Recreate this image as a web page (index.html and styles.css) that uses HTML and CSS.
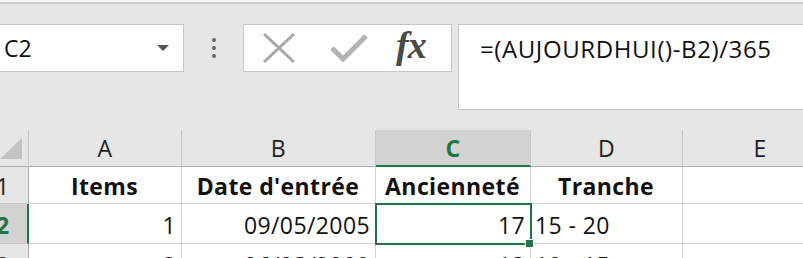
FILE: index.html
```html
<!DOCTYPE html>
<html lang="fr">
<head>
    <meta charset="UTF-8">
    <title>Classeur - Ancienneté</title>
    <link rel="stylesheet" href="styles.css">
</head>
<body>

    <div class="top-strip"></div>

    <!-- barre de formule -->
    <div class="formula-bar">
        <div class="name-box">
            <span>C2</span>
            <span class="arrow"></span>
        </div>
        <div class="grip">
            <span></span><span></span><span></span>
        </div>
        <div class="buttons">
            <svg class="icon-x" width="34" height="30" viewBox="0 0 34 30">
                <path d="M2 1 L32 29 M32 1 L2 29" stroke="#a9a9a9" stroke-width="3" fill="none"/>
            </svg>
            <svg class="icon-check" width="38" height="30" viewBox="0 0 38 30">
                <path d="M2 15 L13 26 L36 3" stroke="#b3b3b3" stroke-width="5" fill="none"/>
            </svg>
            <span class="fx">fx</span>
        </div>
        <div class="formula">=(AUJOURDHUI()-B2)/365</div>
    </div>

    <!-- feuille -->
    <div class="sheet">
        <div class="corner"><span class="tri"></span></div>
        <div class="col-head">A</div>
        <div class="col-head">B</div>
        <div class="col-head selected">C</div>
        <div class="col-head">D</div>
        <div class="col-head">E</div>

        <div class="row-head">1</div>
        <div class="cell bold center">Items</div>
        <div class="cell bold center">Date d'entrée</div>
        <div class="cell bold center">Ancienneté</div>
        <div class="cell bold center">Tranche</div>
        <div class="cell"></div>

        <div class="row-head selected">2</div>
        <div class="cell right">1</div>
        <div class="cell right">09/05/2005</div>
        <div class="cell right active">17<span class="handle"></span></div>
        <div class="cell">15 - 20</div>
        <div class="cell"></div>

        <div class="row-head">3</div>
        <div class="cell right">2</div>
        <div class="cell right">06/03/2009</div>
        <div class="cell right">13</div>
        <div class="cell">10 - 15</div>
        <div class="cell"></div>
    </div>

</body>
</html>
```

FILE: styles.css
```css
body {
    margin: 0;
    padding: 0;
    width: 803px;
    height: 258px;
    overflow: hidden;
    background-color: #e6e6e6;
    font-family: 'Open Sans', 'Liberation Sans', sans-serif;
    color: #222;
}

.top-strip {
    height: 2px;
    background-color: #f4f4f4;
    border-bottom: 2px solid #cacaca;
}

/* Formula bar */
.formula-bar {
    display: flex;
    align-items: flex-start;
    height: 126px;
    padding-top: 20px;
    box-sizing: border-box;
}

.name-box {
    width: 184px;
    height: 48px;
    box-sizing: border-box;
    background-color: #fff;
    border: 1px solid #c6c6c6;
    border-left: none;
    display: flex;
    align-items: center;
    justify-content: space-between;
    padding: 0 14px 0 4px;
    font-size: 23px;
    color: #111;
}

.name-box .arrow {
    width: 0;
    height: 0;
    border-left: 6px solid transparent;
    border-right: 6px solid transparent;
    border-top: 6px solid #555;
}

.grip {
    width: 59px;
    height: 48px;
    display: flex;
    flex-direction: column;
    align-items: center;
    justify-content: center;
    gap: 4px;
}

.grip span {
    width: 4px;
    height: 4px;
    border-radius: 2px;
    background-color: #666;
}

.buttons {
    width: 209px;
    height: 48px;
    box-sizing: border-box;
    background-color: #fff;
    border: 1px solid #c6c6c6;
    display: flex;
    align-items: center;
    padding-left: 18px;
}

.icon-check {
    margin-left: 34px;
}

.fx {
    margin-left: 28px;
    font-family: 'Liberation Serif', serif;
    font-style: italic;
    font-weight: bold;
    font-size: 38px;
    line-height: 1;
    color: #4a4a4a;
    letter-spacing: -1px;
    margin-top: -6px;
}

.formula {
    margin-left: 6px;
    flex: 1;
    height: 86px;
    box-sizing: border-box;
    background-color: #fff;
    border: 1px solid #c6c6c6;
    border-right: none;
    padding: 7px 0 0 21px;
    font-size: 24px;
    letter-spacing: 0.6px;
    color: #111;
    white-space: nowrap;
}

/* Sheet */
.sheet {
    display: grid;
    grid-template-columns: 29px 153px 194px 155px 152px 155px;
    grid-template-rows: 37px 37px 40px 40px;
    font-size: 23px;
    letter-spacing: 0.4px;
}

.corner {
    border-right: 1px solid #c4c4c4;
    border-bottom: 1px solid #ababab;
    display: flex;
    align-items: flex-end;
    padding-bottom: 7px;
}

.corner .tri {
    width: 0;
    height: 0;
    border-left: 22px solid transparent;
    border-bottom: 21px solid #c2c2c2;
}

.col-head {
    display: flex;
    align-items: center;
    justify-content: center;
    border-right: 1px solid #c8c8c8;
    border-bottom: 1px solid #ababab;
    color: #222;
}

.col-head.selected {
    background-color: #d2d2d2;
    color: #217346;
    font-weight: bold;
    border-bottom: 2px solid #217346;
}

.row-head {
    display: flex;
    align-items: center;
    border-right: 1px solid #ababab;
    border-bottom: 1px solid #c8c8c8;
    margin-left: -4px;
    padding-top: 2px;
}

.row-head.selected {
    background-color: #d2d2d2;
    color: #217346;
    font-weight: bold;
    border-right: 2px solid #217346;
}

.cell {
    position: relative;
    background-color: #fff;
    border-right: 1px solid #d4d4d4;
    border-bottom: 1px solid #d4d4d4;
    display: flex;
    align-items: center;
    padding: 2px 5px 0 4px;
    white-space: nowrap;
    color: #111;
}

.cell.bold {
    font-weight: bold;
}

.cell.center {
    justify-content: center;
}

.cell.right {
    justify-content: flex-end;
}

.cell.active {
    outline: 2px solid #217346;
    outline-offset: -1px;
    z-index: 2;
}

.cell .handle {
    position: absolute;
    right: -4px;
    bottom: -5px;
    width: 7px;
    height: 7px;
    background-color: #217346;
    border: 1px solid #fff;
}
```
